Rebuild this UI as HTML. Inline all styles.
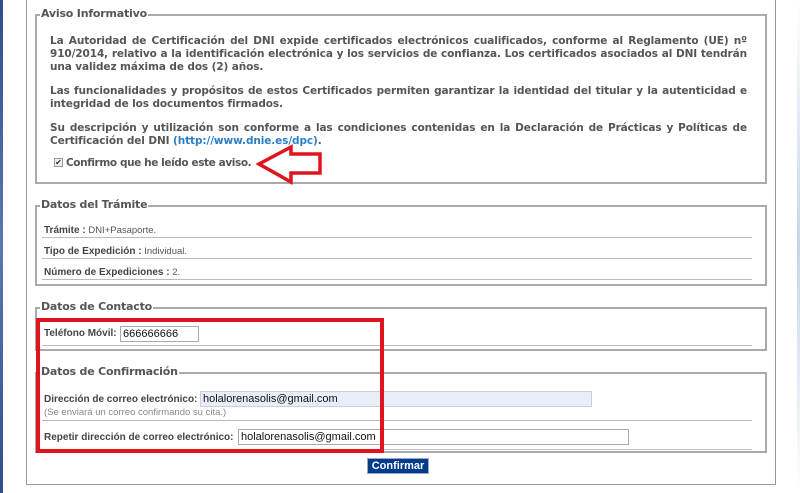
<!DOCTYPE html>
<html><head><meta charset="utf-8"><style>
*{margin:0;padding:0;box-sizing:border-box}
body{width:800px;height:493px;overflow:hidden;background:#fff;position:relative;font-family:Verdana,"DejaVu Sans","Liberation Sans",sans-serif;color:#555}
.a{position:absolute}
.strip{left:0;top:0;width:3px;height:493px;background:linear-gradient(#2f4d8c,#5a78b0,#2f4d8c)}
.rstrip{left:797px;top:0;width:3px;height:493px;background:linear-gradient(#fff,#c8d4e8,#fff)}
.panel{left:26px;top:-2px;width:750px;height:487px;border:1px solid #999}
.fs{border:2px solid #aaa}
.lg{background:#fff;font-weight:bold;font-size:11px;padding:0 1px;color:#555;white-space:nowrap;letter-spacing:-0.2px}
.p{font-size:10.5px;font-weight:bold;line-height:13px;left:50px;width:697px;letter-spacing:-0.1px}
.p div{text-align:justify;text-align-last:justify;white-space:nowrap;overflow:visible}
.p div.l{text-align-last:left}
.ln{height:1px;background:#bbb;left:42px;width:710px}
.r{font-size:9.5px;white-space:nowrap;font-family:"Liberation Sans",Arial,sans-serif}
.r b{font-weight:bold;font-size:10px;color:#444}
.in{border:1px solid #aaa;background:#fff;font-family:"Liberation Sans",Arial,sans-serif;font-size:11px;color:#111;padding:1px 2px;height:16px;line-height:13px}
</style></head><body>
<div class="a strip"></div><div class="a rstrip"></div>
<div class="a panel"></div>

<div class="a fs" style="left:35px;top:14px;width:732px;height:170px"></div>
<div class="a lg" style="left:40px;top:7px">Aviso Informativo</div>
<div class="a p" style="top:35px"><div style="white-space:normal">La Autoridad de Certificación del DNI expide certificados electrónicos cualificados, conforme al Reglamento (UE) nº</div><div style="white-space:normal">910/2014, relativo a la identificación electrónica y los servicios de confianza. Los certificados asociados al DNI tendrán</div><div class="l">una validez máxima de dos (2) años.</div></div>
<div class="a p" style="top:85px"><div style="white-space:normal">Las funcionalidades y propósitos de estos Certificados permiten garantizar la identidad del titular y la autenticidad e</div><div class="l">integridad de los documentos firmados.</div></div>
<div class="a p" style="top:122px"><div style="white-space:normal">Su descripción y utilización son conforme a las condiciones contenidas en la Declaración de Prácticas y Políticas de</div><div class="l">Certificación del DNI <span style="color:#2a7fc4">(http://www.dnie.es/dpc)</span>.</div></div>
<div class="a" style="left:54px;top:158px;width:9px;height:9px;border:1px solid #999;background:#eee;font-size:8px;line-height:8px;text-align:center;color:#333">✔</div>
<div class="a" style="left:66px;top:157px;font-size:10.5px;font-weight:bold;letter-spacing:-0.4px;white-space:nowrap">Confirmo que he leído este aviso.</div>
<svg class="a" style="left:0;top:0" width="800" height="493"><polygon points="259,164 291,147 291,154 320,154 320,173 291,173 291,182" fill="#fff" stroke="#e0141e" stroke-width="3.5"/></svg>

<div class="a fs" style="left:35px;top:205px;width:732px;height:81px"></div>
<div class="a lg" style="left:40px;top:198px">Datos del Trámite</div>
<div class="a r" style="left:44px;top:225px"><b>Trámite :</b> DNI+Pasaporte.</div><div class="a ln" style="top:237px"></div>
<div class="a r" style="left:44px;top:246px"><b>Tipo de Expedición :</b> Individual.</div><div class="a ln" style="top:258px"></div>
<div class="a r" style="left:44px;top:267px"><b>Número de Expediciones :</b> 2.</div><div class="a ln" style="top:279px"></div>

<div class="a fs" style="left:35px;top:307px;width:732px;height:44px"></div>
<div class="a lg" style="left:40px;top:300px">Datos de Contacto</div>
<div class="a r" style="left:44px;top:328px"><b>Teléfono Móvil:</b></div>
<div class="a in" style="left:120px;top:326px;width:79px">666666666</div>
<div class="a ln" style="top:345px"></div>

<div class="a fs" style="left:35px;top:372px;width:732px;height:81px"></div>
<div class="a lg" style="left:40px;top:365px">Datos de Confirmación</div>
<div class="a r" style="left:44px;top:394px"><b>Dirección de correo electrónico:</b></div>
<div class="a in" style="left:200px;top:391px;width:392px;background:#e8eef8;border-color:#ccd">holalorenasolis@gmail.com</div>
<div class="a r" style="left:44px;top:407px;color:#888;font-size:9.5px">(Se enviará un correo confirmando su cita.)</div>
<div class="a ln" style="top:420px"></div>
<div class="a r" style="left:44px;top:432px"><b>Repetir dirección de correo electrónico:</b></div>
<div class="a in" style="left:238px;top:429px;width:391px">holalorenasolis@gmail.com</div>
<div class="a ln" style="top:449px"></div>

<div class="a" style="left:36px;top:318px;width:348px;height:135px;border:4px solid #e0141e"></div>

<div class="a" style="left:367px;top:458px;width:62px;height:16px;background:#003b8e;border:1px solid #9ab;color:#fff;font-family:'Liberation Sans',Arial,sans-serif;font-weight:bold;font-size:11px;text-align:center;line-height:14px">Confirmar</div>
</body></html>
